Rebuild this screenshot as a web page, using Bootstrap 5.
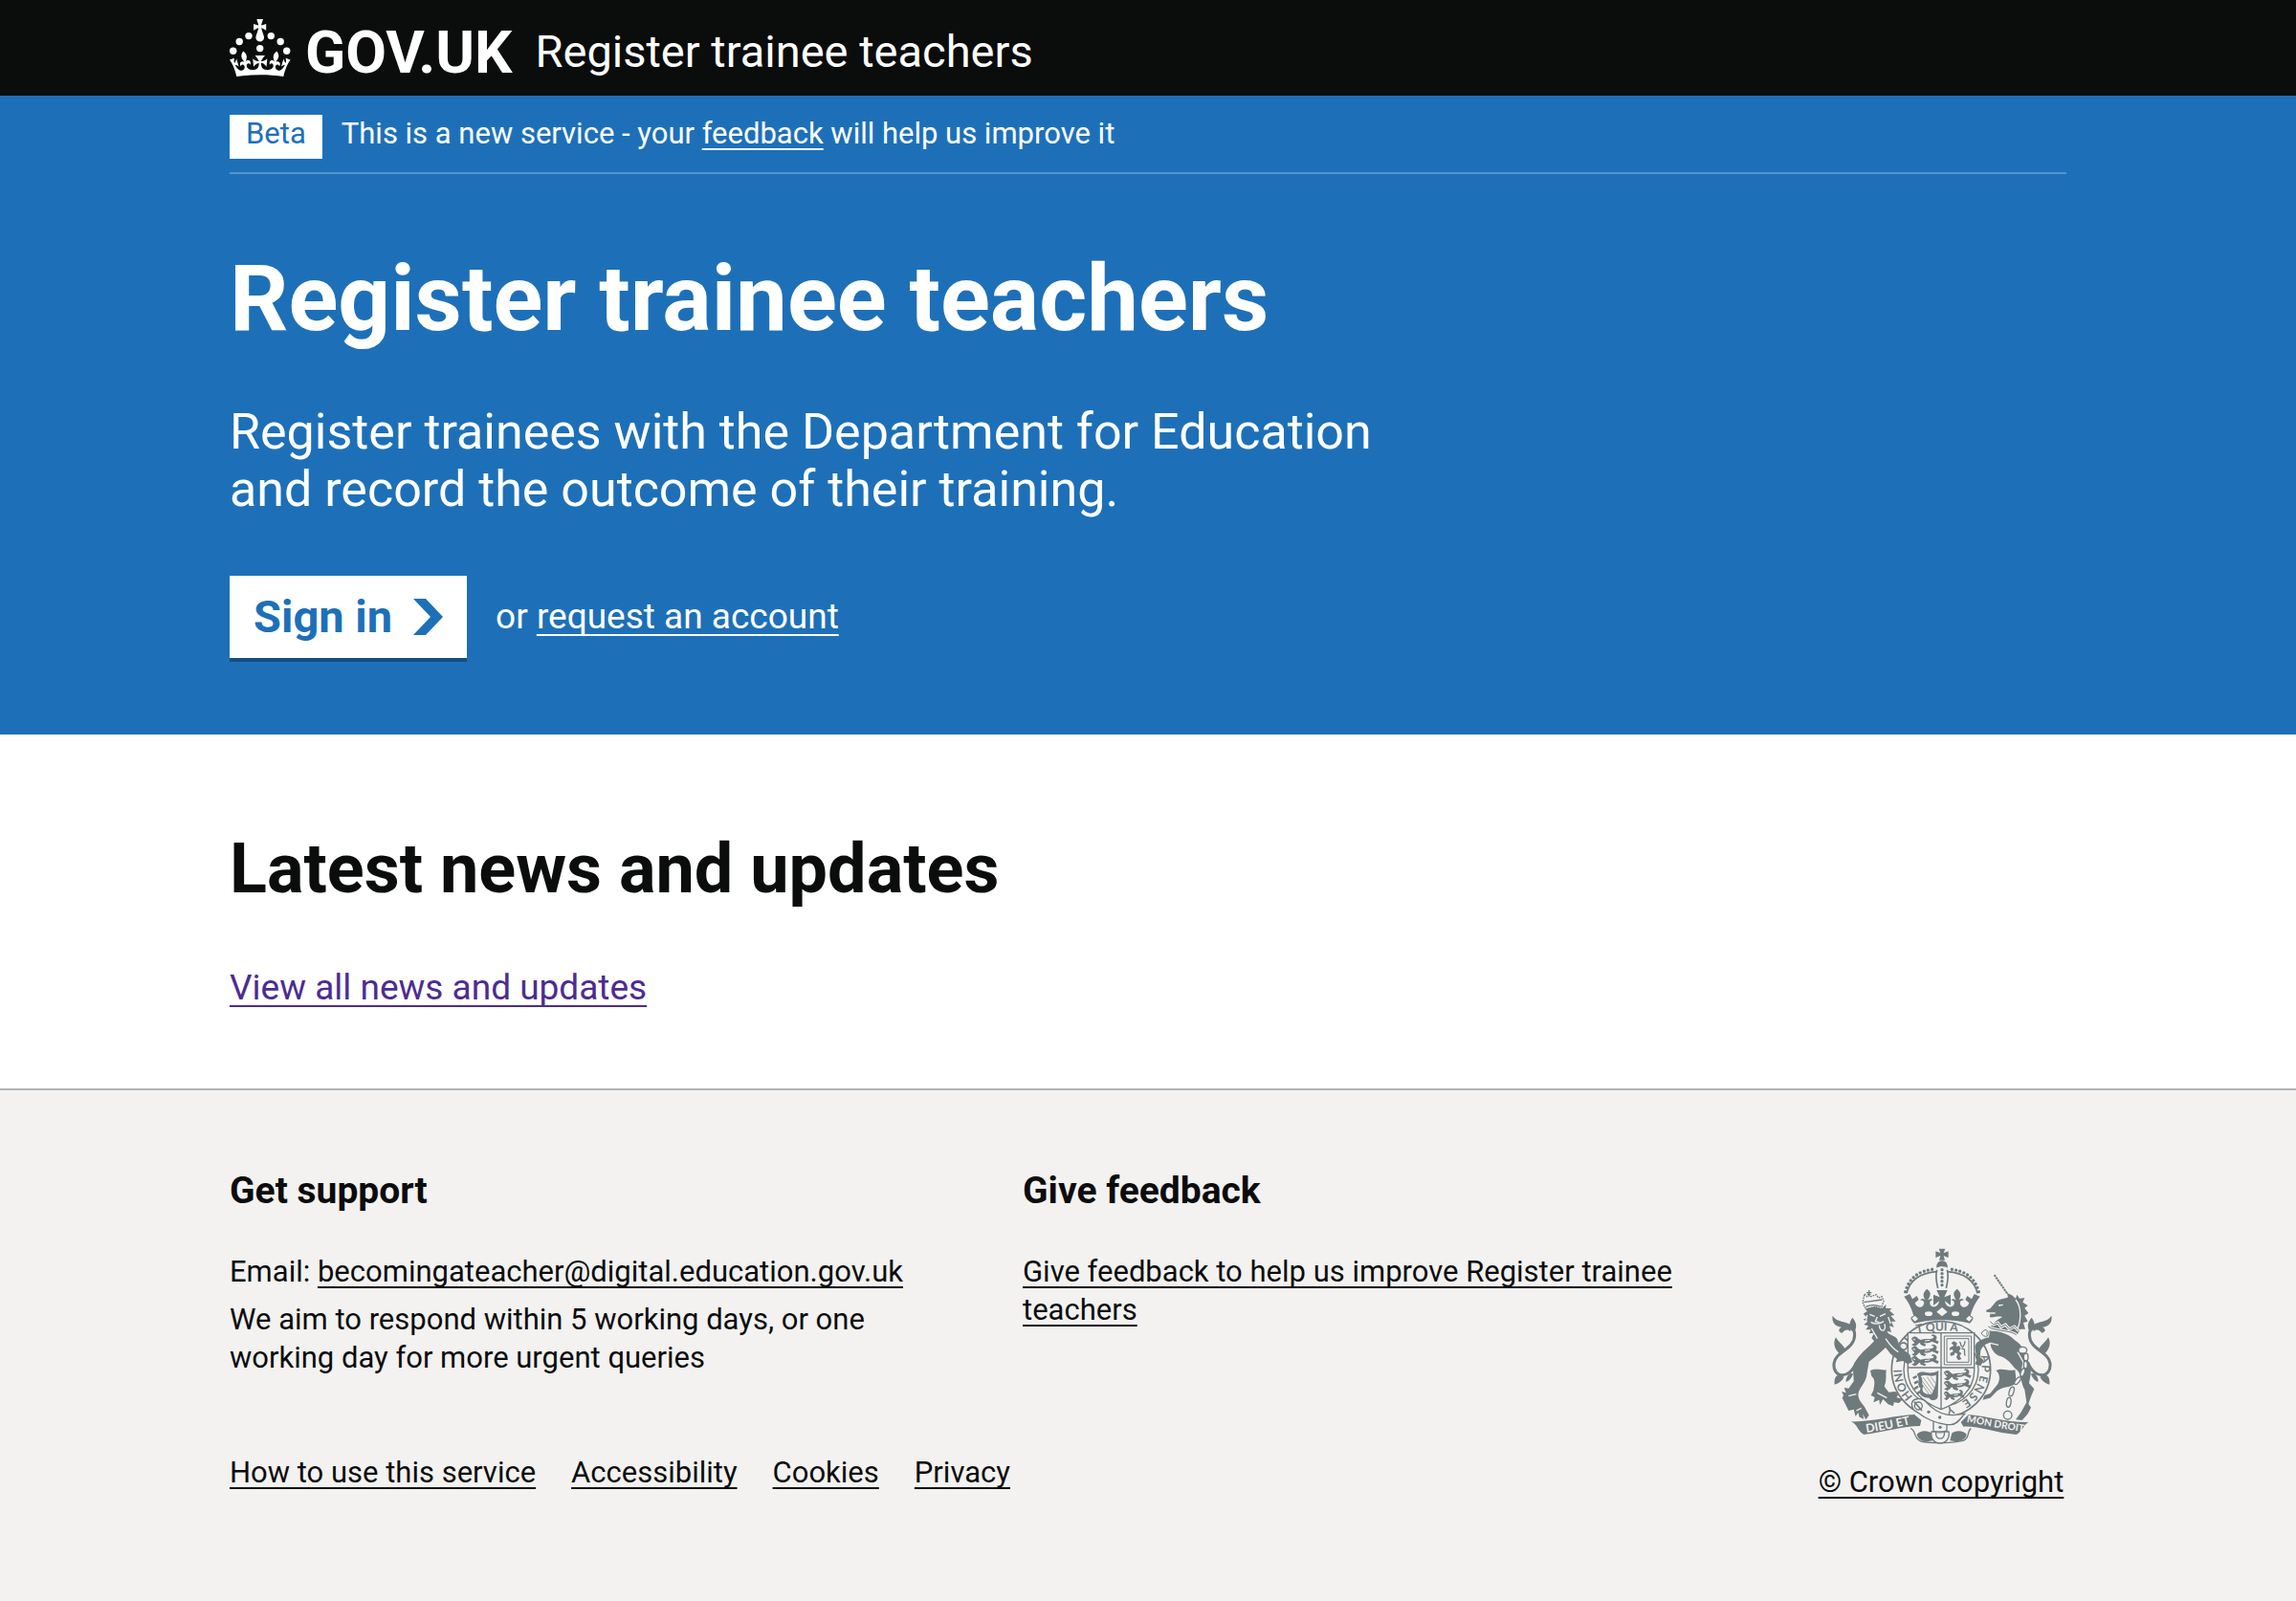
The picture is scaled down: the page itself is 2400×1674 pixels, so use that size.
<!DOCTYPE html>
<html lang="en">
<head>
<meta charset="utf-8">
<meta name="viewport" content="width=device-width, initial-scale=1">
<title>Register trainee teachers - GOV.UK</title>
<link href="https://cdn.jsdelivr.net/npm/bootstrap@5.3.0/dist/css/bootstrap.min.css" rel="stylesheet">
<style>
  :root { --ink: #0b0c0c; --brand: #1d70b8; --canvas: #f3f2f1; }
  body { font-family: Roboto, "Liberation Sans", sans-serif; font-size: 31px; line-height: 40px; color: var(--ink); background: var(--canvas); }
  p, ul { margin-bottom: 0; }
  a { color: inherit; text-decoration: underline; text-decoration-thickness: 2px; text-underline-offset: 5px; text-decoration-skip-ink: none; }
  a:hover { color: inherit; text-decoration-thickness: 4px; }
  .page-width { max-width: 1968px; padding: 0 24px; margin: 0 auto; }
  .text-large { font-size: 37px; line-height: 50px; }
  .text-large a { text-underline-offset: 6px; }
  .site-header { background: var(--ink); color: #fff; }
  .site-header a { text-decoration: none; }
  .header-inner { min-height: 100px; gap: 24px; }
  .logo-link { gap: 15px; }
  .logo-word { font-size: 62px; line-height: 60px; font-weight: 700; padding-top: 10px; }
  .service-name { font-size: 47px; line-height: 60px; padding-top: 8px; }
  .masthead { background: var(--brand); color: #fff; padding-bottom: 80px; }
  .phase-banner { padding: 20px 0 14px; gap: 20px; border-bottom: 2px solid #5694ca; }
  .phase-tag { background: #fff; color: var(--brand); padding: 0 17px 6px; }
  .masthead h1 { font-size: 96px; line-height: 100px; font-weight: 700; margin: 80px 0 60px; }
  .intro { font-size: 52px; line-height: 60px; max-width: 1260px; margin-bottom: 60px; }
  .start-btn { background: #fff; color: var(--brand); font-size: 47px; line-height: 50px; font-weight: 700; border: 0; border-radius: 0; padding: 18px 25px; gap: 22px; box-shadow: 0 4px 0 #144e81; }
  .start-btn:hover { background: #e8f1f8; color: var(--brand); }
  .start-row { gap: 30px; }
  .news { background: #fff; padding: 100px 0 80px; }
  .news h2 { font-size: 72px; line-height: 82px; font-weight: 700; margin-bottom: 58px; }
  .news a { color: #4c2c92; }
  .site-footer { border-top: 2px solid #b1b4b6; padding: 80px 0 104px; }
  .site-footer h2 { font-size: 39px; line-height: 50px; font-weight: 700; margin-bottom: 40px; }
  .footer-inner { gap: 60px; }
  .footer-cols { --bs-gutter-x: 60px; }
  .respond { margin-top: 10px; max-width: 700px; }
  .footer-links { margin: 80px 0 10px; gap: 0 37px; }
  .crest-link { gap: 20px; min-width: 262px; }
</style>
</head>
<body>
<header class="site-header">
  <div class="page-width header-inner d-flex align-items-center">
    <a class="logo-link d-flex align-items-center" href="#" aria-label="GOV.UK">
      <svg width="64" height="60" viewBox="0 0 64 60" fill="#fff" aria-hidden="true">
        <circle cx="20" cy="17.6" r="3.7"/><circle cx="10.2" cy="23.5" r="3.7"/><circle cx="3.7" cy="33.2" r="3.7"/><circle cx="31.7" cy="30.6" r="3.7"/><circle cx="43.3" cy="17.6" r="3.7"/><circle cx="53.2" cy="23.5" r="3.7"/><circle cx="59.7" cy="33.2" r="3.7"/>
        <path d="M33.1,9.8c.2-.1.3-.3.5-.5l4.6,2.4v-6.8l-4.6,1.5c-.1-.2-.3-.3-.5-.5l1.9-5.9h-6.7l1.9,5.9c-.2.1-.3.3-.5.5l-4.6-1.5v6.8l4.6-2.4c.1.2.3.3.5.5l-2.6,8c-.9,2.8,1.2,5.7,4.1,5.7h0c3,0,5.1-2.9,4.1-5.7l-2.6-8ZM37,37.9s-3.4,3.8-4.1,6.1c2.2,0,4.2-.5,6.4-2.8l-.7,8.5c-2-2.8-4.4-4.1-5.7-3.8.1,3.1.5,6.7,5.8,7.2,3.7.3,6.7-1.5,7-3.8.4-2.6-2-4.3-3.7-1.6-1.4-4.5,2.4-6.1,4.9-3.2-1.9-4.5-1.8-7.7,2.4-10.9,3,4,2.6,7.3-1.2,11.1,2.4-1.3,6.2,0,4,4.6-1.2-2.8-3.7-2.2-4.2.2-.3,1.7.7,3.7,3,4.2,1.9.3,4.7-.9,7-5.9-1.3,0-2.4.7-3.9,1.7l2.4-8c.6,2.3,1.4,3.7,2.2,4.5.6-1.6.5-2.8,0-5.3l5,1.8c-2.6,3.6-5.2,8.7-7.3,17.5-7.4-1.1-15.7-1.7-24.5-1.7h0c-8.8,0-17.1.6-24.5,1.7-2.1-8.9-4.7-13.9-7.3-17.5l5-1.8c-.5,2.5-.6,3.7,0,5.3.8-.8,1.6-2.3,2.2-4.5l2.4,8c-1.5-1-2.6-1.7-3.9-1.7,2.3,5,5.2,6.2,7,5.9,2.3-.4,3.3-2.4,3-4.2-.5-2.4-3-3.1-4.2-.2-2.2-4.6,1.6-6,4-4.6-3.7-3.7-4.2-7.1-1.2-11.1,4.2,3.2,4.3,6.4,2.4,10.9,2.5-2.8,6.3-1.3,4.9,3.2-1.8-2.7-4.1-1-3.7,1.6.3,2.3,3.3,4.1,7,3.8,5.4-.5,5.7-4.2,5.8-7.2-1.3-.2-3.7,1-5.7,3.8l-.7-8.5c2.2,2.3,4.2,2.7,6.4,2.8-.7-2.3-4.1-6.1-4.1-6.1h10.6Z"/>
      </svg>
      <span class="logo-word">GOV.UK</span>
    </a>
    <a class="service-name" href="#">Register trainee teachers</a>
  </div>
</header>

<main>
  <section class="masthead">
    <div class="page-width">
      <div class="phase-banner d-flex align-items-start">
        <strong class="phase-tag fw-normal">Beta</strong>
        <span>This is a new service - your <a href="#">feedback</a> will help us improve it</span>
      </div>
      <h1>Register trainee teachers</h1>
      <p class="intro">Register trainees with the Department for Education and record the outcome of their training.</p>
      <div class="start-row d-flex align-items-center">
        <button type="button" class="btn start-btn d-inline-flex align-items-center">
          Sign in
          <svg width="31" height="38" viewBox="0 0 31 38" fill="currentColor" aria-hidden="true"><path d="M0 0h13l18 19-18 19H0l18-19z"/></svg>
        </button>
        <span class="text-large">or <a href="#">request an account</a></span>
      </div>
    </div>
  </section>

  <section class="news">
    <div class="page-width">
      <h2>Latest news and updates</h2>
      <p class="text-large"><a href="#">View all news and updates</a></p>
    </div>
  </section>
</main>

<footer class="site-footer">
  <div class="page-width footer-inner d-flex align-items-end">
    <div class="flex-grow-1">
      <div class="row footer-cols">
        <div class="col-6">
          <h2>Get support</h2>
          <p>Email: <a href="mailto:becomingateacher@digital.education.gov.uk">becomingateacher@digital.education.gov.uk</a></p>
          <p class="respond">We aim to respond within 5 working days, or one working day for more urgent queries</p>
        </div>
        <div class="col-6">
          <h2>Give feedback</h2>
          <p><a href="#">Give feedback to help us improve Register trainee teachers</a></p>
        </div>
      </div>
      <ul class="footer-links list-unstyled d-flex flex-wrap">
        <li><a href="#">How to use this service</a></li>
        <li><a href="#">Accessibility</a></li>
        <li><a href="#">Cookies</a></li>
        <li><a href="#">Privacy</a></li>
      </ul>
    </div>
    <a class="crest-link d-flex flex-column align-items-center flex-shrink-0" href="#">
      <svg width="232" height="205" viewBox="102 46 696 615" fill="#6f7a7c" stroke="none" aria-hidden="true">
        <defs>
          <path id="garterL" d="M362 512A124 122 0 0 1 328 412"/>
          <path id="garterL2" d="M329 392A124 122 0 0 1 380 322"/>
          <path id="garterTop" d="M368 314Q450 296 540 314"/>
          <path id="mottoL" d="M216 625Q290 614 360 597"/>
          <path id="mottoR" d="M530 591Q612 608 704 622"/>
          <g id="tail">
            <path d="M722 405C745 462 796 452 792 408C786 368 728 366 727 318C727 290 752 282 779 280" fill="none" stroke="#6f7a7c" stroke-width="9"/>
            <path d="M740 300C750 270 778 284 796 258C800 278 788 292 768 294C780 300 778 310 766 312C756 300 748 300 740 308zM728 310C718 290 722 278 734 264C744 278 746 292 738 304zM756 366C762 348 778 342 786 326C796 344 790 362 776 376zM768 446C784 440 792 452 790 474C776 470 766 462 760 450zM742 438C752 448 756 458 754 466C742 462 734 450 732 440z"/>
          </g>
          <g id="halfCrown">
            <path d="M342 188C352 146 388 124 436 120" fill="none" stroke="#6f7a7c" stroke-width="5"/>
            <path d="M338 183C350 138 382 116 430 112" fill="none" stroke="#6f7a7c" stroke-width="10" stroke-linecap="round" stroke-dasharray="0 13"/>
            <path d="M437 114C432 132 435 152 440 172" fill="none" stroke="#6f7a7c" stroke-width="5"/>
            <path d="M453 178H436L446 200L426 192V226L444 212C442 230 424 236 416 224C412 214 418 208 426 210C418 202 410 206 408 212C414 196 424 188 406 174C388 188 396 200 402 212C398 204 388 202 384 210C394 208 400 216 394 226C386 236 372 232 368 218L380 208L374 196L360 206L352 190L334 198C352 220 360 244 364 258C352 262 352 268 366 282C400 274 426 272 453 272z"/>
          </g>
          <g id="passant">
            <path d="M0 6C2-4 16-4 20 4L28 9C42 4 54 8 64 5C72 2 72-4 62-3L66-8C78-8 84 2 76 10L86 14L82 22L74 18L64 14C56 20 46 18 38 19L46 24L42 29L30 25L26 18C20 20 18 28 10 29L0 24L10 19L6 14z"/>
            <path d="M5 6L12 9M42 12L58 10" stroke="#f3f2f1" stroke-width="3"/>
          </g>
        </defs>
        <!-- royal crown -->
        <use href="#halfCrown"/>
        <use href="#halfCrown" transform="matrix(-1 0 0 1 906 0)"/>
        <path d="M443 48H463L458 61L473 56V76L458 70L462 84H444L448 70L433 76V56L448 61zM436 108C432 78 474 78 470 108C462 102 444 102 436 108z"/>
        <path d="M453 114V174" fill="none" stroke="#6f7a7c" stroke-width="10" stroke-linecap="round" stroke-dasharray="0 12"/>
        <path d="M453 232L470 246L453 260L436 246zM368 258L378 268L368 276L358 266zM538 258L548 266L538 276L528 268z" fill="#f3f2f1"/>
        <ellipse cx="411" cy="252" rx="12" ry="7" fill="#f3f2f1"/><ellipse cx="495" cy="252" rx="12" ry="7" fill="#f3f2f1"/>
        <!-- tails -->
        <use href="#tail"/>
        <use href="#tail" transform="matrix(-1 0 0 1 906 0)"/>
        <!-- garter -->
        <ellipse cx="450" cy="427" rx="155" ry="151" fill="#f3f2f1" stroke="#6f7a7c" stroke-width="5"/>
        <ellipse cx="450" cy="427" rx="117" ry="115" fill="none" stroke="#6f7a7c" stroke-width="4"/>
        <g font-family="Lato, sans-serif" font-size="36" font-weight="700">
          <text><textPath href="#garterL">HONI</textPath></text>
          <text><textPath href="#garterL2">SOI</textPath></text>
          <text><textPath href="#garterTop" startOffset="6">T QUI A</textPath></text>
          <text transform="translate(574 384) rotate(72)">A</text>
          <text transform="translate(578 412) rotate(94)">P</text>
          <text transform="translate(573 444) rotate(104)">E</text>
          <text transform="translate(565 468) rotate(118)">N</text>
          <text transform="translate(548 497) rotate(130)">S</text>
          <text transform="translate(532 516) rotate(145)">E</text>
          <text transform="translate(486 539) rotate(162)">Y</text>
        </g>
        <!-- shield -->
        <path d="M346 312H554V430C554 490 506 530 450 552C394 530 346 490 346 430z" fill="#f3f2f1" stroke="#6f7a7c" stroke-width="4"/>
        <path d="M450 312V552M346 421H554" stroke="#6f7a7c" stroke-width="4"/>
        <use href="#passant" x="357" y="325"/>
        <use href="#passant" x="357" y="356"/>
        <use href="#passant" x="357" y="387"/>
        <use href="#passant" x="459" y="432"/>
        <use href="#passant" x="459" y="464"/>
        <use href="#passant" transform="translate(459 497) scale(.75 .9)"/>
        <path d="M460 322H545V412H460zM468 330H537V404H468z" fill="none" stroke="#6f7a7c" stroke-width="3"/>
        <path d="M482 344L490 338L500 344L498 356L506 352L512 360L506 370L514 376L508 384L514 394L504 398L498 388L502 378L494 374L490 382L480 384L478 376L488 370L486 364L476 366L478 358L490 352z"/>
        <path d="M508 340C516 348 508 354 518 356C528 344 522 342 526 338M514 362C532 360 518 374 526 384" fill="none" stroke="#6f7a7c" stroke-width="4"/>
        <path d="M374 442C392 424 410 448 442 430L440 512C438 526 418 526 412 516C388 516 376 500 386 486C370 474 388 460 374 442zM386 448C396 458 386 468 394 478C386 498 400 506 420 504C432 486 436 464 434 444C416 452 402 440 386 448z" fill-rule="evenodd"/>
        <path d="M394 452L426 496M390 462L420 502M392 476L412 504M406 450L430 486M418 450L432 470" stroke="#6f7a7c" stroke-width="2"/>
        <path d="M374 448L362 454M378 464L366 470M378 480L366 488M384 496L374 504" stroke="#6f7a7c" stroke-width="7"/>
        <!-- lion -->
        <path d="M210 190L218 198L224 184L230 198L246 192L254 202L264 198L270 212L262 236L244 230L214 238L204 216z" fill="none" stroke="#6f7a7c" stroke-width="4" stroke-dasharray="5 3"/>
        <path d="M224 178V198M216 186H232M208 216L264 208M214 230Q236 220 262 230" stroke="#6f7a7c" stroke-width="4" fill="none"/>
        <path d="M206 252L218 244L214 236L240 230L264 236L278 222L276 234L296 236L288 242L304 256L292 258L308 276L294 276L302 294L288 290L294 310L280 306C286 320 302 318 312 330L322 358L352 380L360 404L346 410L330 400L308 404L312 394L292 378L276 358C262 372 244 388 224 402L218 436C216 466 200 476 192 496C186 514 196 526 210 544L224 570L214 584L204 566L208 582L194 576L190 562L182 574L176 552L160 556L150 536L140 516L144 508L138 496L152 500L146 484L160 486L176 464C176 432 168 418 188 392C200 374 226 354 240 338L232 328L240 312L224 314L230 302L214 302L222 290L208 286L220 276L206 270L218 264z"/>
        <path d="M228 430C244 422 266 430 278 428C276 446 280 462 272 480L286 498L304 496C318 500 316 510 310 514L330 520L318 532L302 530L300 542L284 536L268 520L258 538L256 522L238 530L242 514L230 508L238 492C240 476 246 460 232 448z"/>
        <path d="M226 254L242 260M258 260L276 252M250 262L244 276L256 278M230 278Q248 290 270 276M256 288Q258 306 270 304Q278 294 272 284M276 330Q296 360 316 372M184 504L160 510M200 548L184 556M250 500L280 516M232 298L250 330M284 262L292 284M218 256L214 280" fill="none" stroke="#f3f2f1" stroke-width="4"/>
        <!-- unicorn -->
        <path d="M617 130L657 188" stroke="#6f7a7c" stroke-width="6" stroke-dasharray="7 2"/>
        <path d="M592 240L604 236L622 214C636 204 650 206 660 200L656 186L672 194L684 204L688 192L696 204L712 202L706 216L722 226L712 234L724 250L712 258L722 276L708 280L714 300L698 300L690 316C670 306 632 308 606 292C620 272 634 268 642 262C622 258 612 266 602 262L606 248L592 246z"/>
        <path d="M684 208C704 232 700 276 690 298" fill="none" stroke="#f3f2f1" stroke-width="4"/>
        <path d="M630 226L644 224M606 250H620" stroke="#f3f2f1" stroke-width="4"/>
        <path d="M592 306C630 304 660 314 680 334C704 348 714 372 722 398C738 424 730 446 726 470L742 488L732 512L724 534L732 546L722 566L704 586L684 584L700 562L718 530L712 490C700 470 702 444 690 430C672 418 668 398 638 386C616 380 602 356 606 342C592 344 578 354 574 368L572 388L584 398L574 416L556 410L562 396L556 356C560 338 576 334 590 328z"/>
        <path d="M604 276L614 286L628 280L638 294L652 286L664 300L680 292L694 306M598 292C620 308 664 302 686 318M576 312Q582 326 596 322Q602 304 588 302z" fill="none" stroke="#f3f2f1" stroke-width="9"/>
        <path d="M604 276L614 286L628 280L638 294L652 286L664 300L680 292L694 306M598 292C620 308 664 302 686 318M576 312Q582 326 596 322Q602 304 588 302z" fill="none" stroke="#6f7a7c" stroke-width="3"/>
        <path d="M622 430C642 420 662 434 682 428L686 466C674 486 650 476 626 494L604 516L580 522L586 508L604 502L628 472C636 456 634 440 622 430z"/>
        <path d="M690 372L708 404L702 440M604 344L630 350" fill="none" stroke="#f3f2f1" stroke-width="4"/>
        <g fill="#f3f2f1" stroke="#6f7a7c" stroke-width="4">
          <ellipse cx="706" cy="366" rx="13" ry="10"/><ellipse cx="716" cy="388" rx="7" ry="12"/><ellipse cx="715" cy="412" rx="6" ry="12"/>
          <ellipse cx="706" cy="436" rx="6" ry="13" transform="rotate(20 706 436)"/><ellipse cx="690" cy="462" rx="6" ry="14" transform="rotate(38 690 462)"/>
          <ellipse cx="671" cy="496" rx="7" ry="15" transform="rotate(18 671 496)"/><ellipse cx="662" cy="530" rx="7" ry="15" transform="rotate(8 662 530)"/>
          <circle cx="659" cy="570" r="13"/>
        </g>
        <!-- motto scroll -->
        <path d="M168 590C230 592 310 570 366 568L388 586L384 604C330 604 280 622 208 631C188 620 190 602 168 590zM724 592C660 594 600 574 536 568L512 592L520 606C570 604 620 626 686 631C704 622 706 604 724 592z"/>
        <path d="M354 612C372 616 362 642 386 652C420 660 484 658 520 650C542 640 530 620 544 612" fill="none" stroke="#6f7a7c" stroke-width="4"/>
        <path d="M374 630C384 618 404 616 420 626L424 650C402 656 378 652 374 630zM530 630C520 618 500 616 484 626L478 650C500 656 526 652 530 630z"/>
        <g font-family="Lato, sans-serif" font-weight="700" style="fill:#f3f2f1">
          <text font-size="37"><textPath href="#mottoL">DIEU ET</textPath></text>
          <text font-size="31"><textPath href="#mottoR">MON DROIT</textPath></text>
        </g>
        <!-- buckle and strap -->
        <path d="M426 580V620Q448 630 468 618V590" fill="#f3f2f1" stroke="#6f7a7c" stroke-width="4"/>
        <path d="M358 534C362 514 392 514 404 530C428 556 456 570 486 570L524 566C512 578 504 598 480 600C440 600 398 580 374 560C362 554 358 546 358 534z" fill="#f3f2f1" stroke="#6f7a7c" stroke-width="4"/>
        <circle cx="379" cy="541" r="12" fill="none" stroke="#6f7a7c" stroke-width="4"/>
        <path d="M366 528L390 556" stroke="#6f7a7c" stroke-width="5"/>
        <circle cx="411" cy="560" r="5"/><circle cx="446" cy="577" r="5"/><circle cx="447" cy="608" r="5"/>
        <path d="M420 622H474C478 642 466 658 447 658C428 658 416 642 420 622zM434 624C430 650 464 650 460 624" fill="#f3f2f1" stroke="#6f7a7c" stroke-width="4"/>
      </svg>
      <span>© Crown copyright</span>
    </a>
  </div>
</footer>
<script src="https://cdn.jsdelivr.net/npm/bootstrap@5.3.0/dist/js/bootstrap.bundle.min.js"></script>
</body>
</html>
